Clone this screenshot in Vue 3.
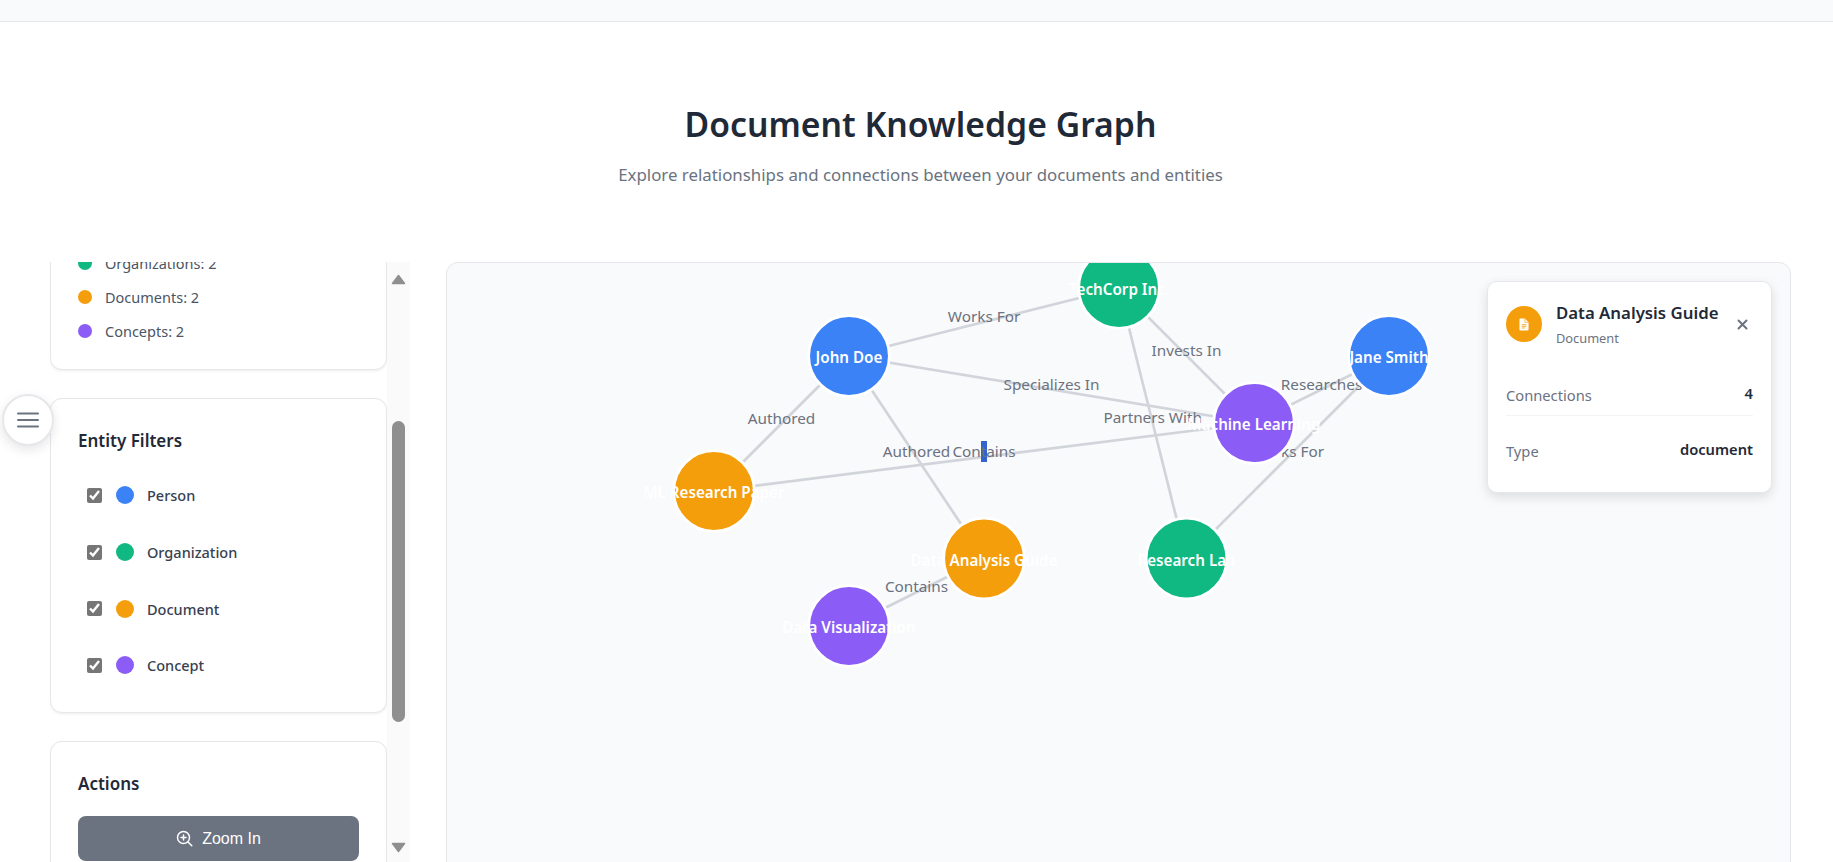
<template>
  <div class="page">
    <div class="topbar"></div>

    <header class="head">
      <h1>Document Knowledge Graph</h1>
      <p>Explore relationships and connections between your documents and entities</p>
    </header>

    <main class="main">
      <button class="menu-btn">
        <svg width="22" height="16" viewBox="0 0 22 16">
          <path d="M1 1.5h20M1 8h20M1 14.5h20" stroke="#6b7280" stroke-width="2" stroke-linecap="round" fill="none" />
        </svg>
      </button>

      <aside class="sidebar">
        <div class="sidebar-scroll">
          <section class="card stats">
            <div v-for="s in stats" :key="s.label" class="stat">
              <span class="stat-dot" :style="{ background: s.color }"></span>
              <span>{{ s.label }}: {{ s.count }}</span>
            </div>
          </section>

          <section class="card filters">
            <h3>Entity Filters</h3>
            <label v-for="f in filters" :key="f.label" class="filter">
              <input type="checkbox" checked />
              <span class="filter-dot" :style="{ background: f.color }"></span>
              <span>{{ f.label }}</span>
            </label>
          </section>

          <section class="card actions">
            <h3>Actions</h3>
            <button class="action-btn">
              <svg width="17" height="17" viewBox="0 0 17 17" fill="none" stroke="#fff" stroke-width="1.5" stroke-linecap="round">
                <circle cx="7.5" cy="7.5" r="6" />
                <path d="M12 12l3.8 3.8M7.5 5v5M5 7.5h5" />
              </svg>
              Zoom In
            </button>
          </section>
        </div>

        <div class="scrollbar">
          <svg width="15" height="11" viewBox="0 0 15 11"><path d="M7.5 1.5L13.5 9.5H1.5z" class="arrow" /></svg>
          <span class="thumb"></span>
          <svg width="15" height="11" viewBox="0 0 15 11"><path d="M1.5 1.5H13.5L7.5 9.5z" class="arrow" /></svg>
        </div>
      </aside>

      <div class="canvas">
        <svg class="graph" width="1343" height="640" viewBox="447 263 1343 640">
          <line
            v-for="e in edgeLines"
            :key="e.label + e.x1"
            :x1="e.x1"
            :y1="e.y1"
            :x2="e.x2"
            :y2="e.y2"
            class="edge"
          />
          <rect x="981" y="441" width="6" height="21" fill="#3463d0" />
          <text
            v-for="e in edgeLines"
            :key="'t' + e.label + e.x1"
            :x="(e.x1 + e.x2) / 2"
            :y="(e.y1 + e.y2) / 2"
            class="edge-label"
          >{{ e.label }}</text>
          <circle
            v-for="n in nodes"
            :key="n.id"
            :cx="n.x"
            :cy="n.y"
            r="40.3"
            :fill="n.color"
            class="node"
          />
          <text
            v-for="n in nodes"
            :key="'l' + n.id"
            :x="n.x"
            :y="n.y + 7"
            class="node-label"
          >{{ n.label }}</text>
        </svg>

        <div class="info">
          <div class="info-head">
            <span class="info-icon">
              <svg width="10" height="13" viewBox="0 0 11 14">
                <path d="M1.5 0.5h5l4 4v8a1 1 0 0 1-1 1h-8a1 1 0 0 1-1-1v-11a1 1 0 0 1 1-1z" fill="#fff" />
                <path d="M6.5 0.5v4h4" fill="none" stroke="#f59e0b" stroke-width="0.8" />
                <path d="M3 7.2h5M3 9h5M3 10.8h3.5" stroke="#f59e0b" stroke-width="0.9" fill="none" />
              </svg>
            </span>
            <div class="info-title">
              <h4>Data Analysis Guide</h4>
              <small>Document</small>
            </div>
            <button class="close">
              <svg width="11" height="11" viewBox="0 0 11 11">
                <path d="M1.5 1.5l8 8M9.5 1.5l-8 8" stroke="#6b7280" stroke-width="2" stroke-linecap="round" />
              </svg>
            </button>
          </div>
          <div class="info-row">
            <span>Connections</span>
            <b>4</b>
          </div>
          <div class="info-row last">
            <span>Type</span>
            <b>document</b>
          </div>
        </div>
      </div>
    </main>
  </div>
</template>

<script setup>
import { computed } from "vue";

const BLUE = "#3b82f6";
const GREEN = "#10b981";
const ORANGE = "#f59e0b";
const PURPLE = "#8b5cf6";

const stats = [
  { label: "Organizations", count: 2, color: GREEN },
  { label: "Documents", count: 2, color: ORANGE },
  { label: "Concepts", count: 2, color: PURPLE },
];

const filters = [
  { label: "Person", color: BLUE },
  { label: "Organization", color: GREEN },
  { label: "Document", color: ORANGE },
  { label: "Concept", color: PURPLE },
];

const nodes = [
  { id: "john", label: "John Doe", x: 849, y: 356, color: BLUE },
  { id: "jane", label: "Jane Smith", x: 1389, y: 356, color: BLUE },
  { id: "tech", label: "TechCorp Inc.", x: 1119, y: 288, color: GREEN },
  { id: "lab", label: "Research Lab", x: 1186.5, y: 558.5, color: GREEN },
  { id: "paper", label: "ML Research Paper", x: 714, y: 491, color: ORANGE },
  { id: "guide", label: "Data Analysis Guide", x: 984, y: 558.5, color: ORANGE },
  { id: "ml", label: "Machine Learning", x: 1254, y: 423, color: PURPLE },
  { id: "viz", label: "Data Visualization", x: 849, y: 626, color: PURPLE },
];

const edges = [
  ["john", "tech", "Works For"],
  ["jane", "lab", "Works For"],
  ["john", "paper", "Authored"],
  ["john", "guide", "Authored"],
  ["paper", "ml", "Contains"],
  ["guide", "viz", "Contains"],
  ["tech", "ml", "Invests In"],
  ["tech", "lab", "Partners With"],
  ["john", "ml", "Specializes In"],
  ["jane", "ml", "Researches"],
];

const edgeLines = computed(() =>
  edges.map(([a, b, label]) => {
    const from = nodes.find((n) => n.id === a);
    const to = nodes.find((n) => n.id === b);
    return { x1: from.x, y1: from.y, x2: to.x, y2: to.y, label };
  })
);
</script>

<style>
html,
body {
  margin: 0;
  background: #fff;
  overflow: hidden;
}
</style>

<style scoped>
.page {
  height: 862px;
  overflow: hidden;
  font-family: "Noto Sans", "Open Sans", sans-serif;
  color: #1f2937;
  background: #fff;
}

.topbar {
  height: 21px;
  background: #f9fafb;
  border-bottom: 1px solid #e5e7eb;
}

.head {
  height: 240px;
  box-sizing: border-box;
  padding: 78px 0 0 8px;
  text-align: center;
}

.head h1 {
  margin: 0;
  font-size: 33.7px;
  line-height: 48px;
  font-weight: 600;
  color: #1f2937;
}

.head p {
  margin: 15px 0 0;
  font-size: 16.85px;
  line-height: 24px;
  color: #6b7280;
}

.main {
  position: relative;
  display: flex;
  gap: 36px;
  height: 600px;
  padding: 0 42px 0 50px;
}

.menu-btn {
  position: absolute;
  left: 2px;
  top: 132px;
  z-index: 3;
  width: 52px;
  height: 52px;
  padding: 0;
  display: flex;
  align-items: center;
  justify-content: center;
  background: #fff;
  border: 2px solid #e5e7eb;
  border-radius: 50%;
  box-shadow: 0 4px 12px rgba(0, 0, 0, 0.1);
}

.sidebar {
  flex: 0 0 360px;
  display: flex;
  height: 600px;
  overflow: hidden;
}

.sidebar-scroll {
  width: 337px;
  flex: none;
  margin-top: -29px;
}

.card {
  box-sizing: border-box;
  background: #fff;
  border: 1px solid #e5e7eb;
  border-radius: 12px;
  box-shadow: 0 1px 3px rgba(0, 0, 0, 0.08);
  margin-bottom: 28px;
}

.stats {
  height: 137px;
  padding: 12px 27px;
}

.stat {
  display: flex;
  align-items: center;
  gap: 13px;
  height: 34px;
  font-size: 14.5px;
  color: #4b5563;
}

.stat-dot {
  width: 14px;
  height: 14px;
  border-radius: 50%;
}

.card h3 {
  margin: 0;
  font-size: 17px;
  line-height: 24px;
  font-weight: 600;
  color: #1f2937;
}

.filters {
  height: 315px;
  padding: 30px 27px 0;
}

.filters h3 {
  margin-bottom: 14px;
}

.filter {
  display: flex;
  align-items: center;
  height: 56.7px;
  font-size: 14.5px;
  font-weight: 500;
  color: #374151;
}

.filter input {
  width: 15px;
  height: 15px;
  margin: 0 14px 0 9px;
  accent-color: #767676;
}

.filter-dot {
  width: 18px;
  height: 18px;
  border-radius: 50%;
  margin-right: 13px;
}

.actions {
  padding: 30px 27px;
}

.actions h3 {
  margin-bottom: 20px;
}

.action-btn {
  width: 100%;
  height: 45px;
  display: flex;
  align-items: center;
  justify-content: center;
  gap: 9px;
  background: #6b7280;
  color: #fff;
  border: none;
  border-radius: 8px;
  font-family: "Liberation Sans", Arial, sans-serif;
  font-size: 16px;
}

.scrollbar {
  flex: none;
  width: 23px;
  height: 600px;
  background: #fafafa;
  display: flex;
  flex-direction: column;
  align-items: center;
  padding: 12px 0 9px;
  box-sizing: border-box;
}

.thumb {
  width: 13px;
  height: 301px;
  margin-top: 136px;
  margin-bottom: auto;
  background: #8f8f8f;
  border-radius: 7px;
}

.arrow {
  fill: #8f8f8f;
  stroke: #8f8f8f;
  stroke-width: 1.5;
  stroke-linejoin: round;
}

.canvas {
  position: relative;
  flex: 1;
  height: 660px;
  background: #f9fafb;
  border: 1px solid #e5e7eb;
  border-radius: 12px;
  overflow: hidden;
}

.graph {
  display: block;
}

.edge {
  stroke: #d1d5db;
  stroke-width: 2.7;
}

.edge-label {
  font-size: 15.3px;
  fill: #6b7280;
  text-anchor: middle;
}

.node {
  stroke: #fff;
  stroke-width: 2.7;
}

.node-label {
  font-size: 15.2px;
  font-weight: 600;
  fill: #fff;
  text-anchor: middle;
}

.info {
  position: absolute;
  top: 18px;
  right: 18px;
  width: 285px;
  height: 212px;
  box-sizing: border-box;
  padding: 20px 18px 0;
  background: #fff;
  border: 1px solid #e5e7eb;
  border-radius: 10px;
  box-shadow: 0 4px 12px rgba(0, 0, 0, 0.12);
}

.info-head {
  display: flex;
  align-items: center;
  gap: 14px;
  height: 44px;
  margin-bottom: 20px;
}

.info-icon {
  flex: none;
  width: 36px;
  height: 36px;
  border-radius: 50%;
  background: #f59e0b;
  display: flex;
  align-items: center;
  justify-content: center;
}

.info-title {
  flex: 1;
  white-space: nowrap;
}

.info-title h4 {
  margin: 0;
  font-size: 16.8px;
  line-height: 22px;
  font-weight: 600;
  color: #1f2937;
}

.info-title small {
  display: block;
  margin-top: 6px;
  font-size: 12.8px;
  line-height: 16px;
  color: #6b7280;
}

.close {
  background: none;
  border: none;
  padding: 0;
  margin-right: 5px;
  display: flex;
}

.info-row {
  display: flex;
  justify-content: space-between;
  box-sizing: border-box;
  height: 50px;
  padding-top: 19px;
  border-bottom: 1px solid #f3f4f6;
  font-size: 14.7px;
  line-height: 20px;
  color: #6b7280;
}

.info-row.last {
  border-bottom: none;
  padding-top: 25px;
}

.info-row b {
  margin-top: -2px;
  font-weight: 600;
  color: #1f2937;
}
</style>
